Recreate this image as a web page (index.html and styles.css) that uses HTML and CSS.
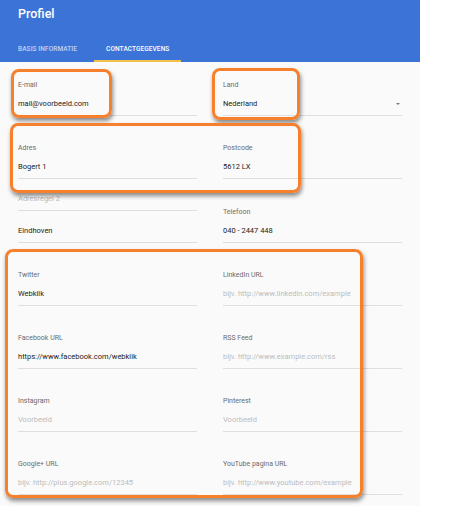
FILE: index.html
```html
<!DOCTYPE html>
<html lang="nl">
<head>
<meta charset="utf-8">
<title>Profiel</title>
<link rel="stylesheet" href="styles.css">
</head>
<body>
<div class="page">
  <header class="header">
    <h1 class="title">Profiel</h1>
    <nav class="tabs">
      <div class="tab">BASIS INFORMATIE</div>
      <div class="tab active">CONTACTGEGEVENS</div>
    </nav>
  </header>
  <main class="content">
    <div class="field"><div class="label">E-mail</div><div class="value">mail@voorbeeld.com</div></div>
    <div class="field"><div class="label">Land</div><div class="value select"><span>Nederland</span><span class="arrow"></span></div></div>

    <div class="field"><div class="label">Adres</div><div class="value">Bogert 1</div></div>
    <div class="field"><div class="label">Postcode</div><div class="value">5612 LX</div></div>

    <div class="stack">
      <div class="field small"><div class="value ph">Adresregel 2</div></div>
      <div class="field small"><div class="value">Eindhoven</div></div>
    </div>
    <div class="field"><div class="label">Telefoon</div><div class="value">040 - 2447 448</div></div>

    <div class="field"><div class="label">Twitter</div><div class="value">Webklik</div></div>
    <div class="field"><div class="label">LinkedIn URL</div><div class="value ph">bijv. http://www.linkedin.com/example</div></div>

    <div class="field"><div class="label">Facebook URL</div><div class="value">https://www.facebook.com/webklik</div></div>
    <div class="field"><div class="label">RSS Feed</div><div class="value ph">bijv. http://www.example.com/rss</div></div>

    <div class="field"><div class="label">Instagram</div><div class="value ph">Voorbeeld</div></div>
    <div class="field"><div class="label">Pinterest</div><div class="value ph">Voorbeeld</div></div>

    <div class="field"><div class="label">Google+ URL</div><div class="value ph">bijv. http://plus.google.com/12345</div></div>
    <div class="field"><div class="label">YouTube pagina URL</div><div class="value ph">bijv. http://www.youtube.com/example</div></div>
  </main>

  <div class="mark mark-email"></div>
  <div class="mark mark-land"></div>
  <div class="mark mark-adres"></div>
  <div class="mark mark-social"></div>
</div>
</body>
</html>
```
FILE: styles.css
```css
* { box-sizing: border-box; }
html, body { margin: 0; padding: 0; background: #ffffff; }
body { font-family: Roboto, "Liberation Sans", Arial, sans-serif; }

.page { position: relative; width: 420px; }

.header {
  background: #3b73d7;
  height: 62px;
  display: flex;
  flex-direction: column;
}
.title {
  margin: 6px 0 0 0;
  padding: 0 18px;
  font-size: 12.5px;
  line-height: 16px;
  font-weight: 500;
  color: #ffffff;
}
.tabs {
  margin-top: auto;
  display: flex;
  gap: 5px;
  padding-left: 6px;
}
.tab {
  padding: 0 12px;
  font-size: 6.5px;
  font-weight: 500;
  line-height: 21px;
  border-bottom: 2px solid transparent;
  color: rgba(255, 255, 255, 0.7);
  letter-spacing: 0.1px;
}
.tab.active {
  color: #ffffff;
  border-bottom-color: #f2c14e;
}

.content {
  background: #fafafa;
  padding: 0 18px 11px;
  display: grid;
  grid-template-columns: 179px 179px;
  column-gap: 26px;
  grid-template-rows: 54px 63px 64px 63px 63px 63px 63px;
}
.stack { display: flex; flex-direction: column; }
.field {
  display: flex;
  flex-direction: column;
  justify-content: flex-end;
  height: 100%;
}
.field.small { height: 32px; }
.label {
  font-size: 7px;
  line-height: 10px;
  color: #6b6b6b;
  margin-bottom: 8.5px;
}
.value {
  font-size: 7.5px;
  line-height: 12px;
  padding-bottom: 5px;
  color: #222222;
  border-bottom: 1px solid #dedede;
  white-space: nowrap;
}
.value.ph { color: #bcbcbc; }
.select {
  display: flex;
  justify-content: space-between;
  align-items: center;
}
.arrow {
  width: 0;
  height: 0;
  border-left: 2.5px solid transparent;
  border-right: 2.5px solid transparent;
  border-top: 2.5px solid #777777;
  margin-right: 2px;
}

.mark {
  position: absolute;
  border: 3.5px solid #f6802b;
  border-radius: 8px;
  box-shadow: 1px 3px 4px rgba(0, 0, 0, 0.45);
}
.mark-email { left: 11px; top: 69px; width: 101px; height: 49px; }
.mark-land { left: 212px; top: 68px; width: 88px; height: 52px; }
.mark-adres { left: 10px; top: 123px; width: 291px; height: 70px; }
.mark-social { left: 5px; top: 249px; width: 358px; height: 249px; }
```
